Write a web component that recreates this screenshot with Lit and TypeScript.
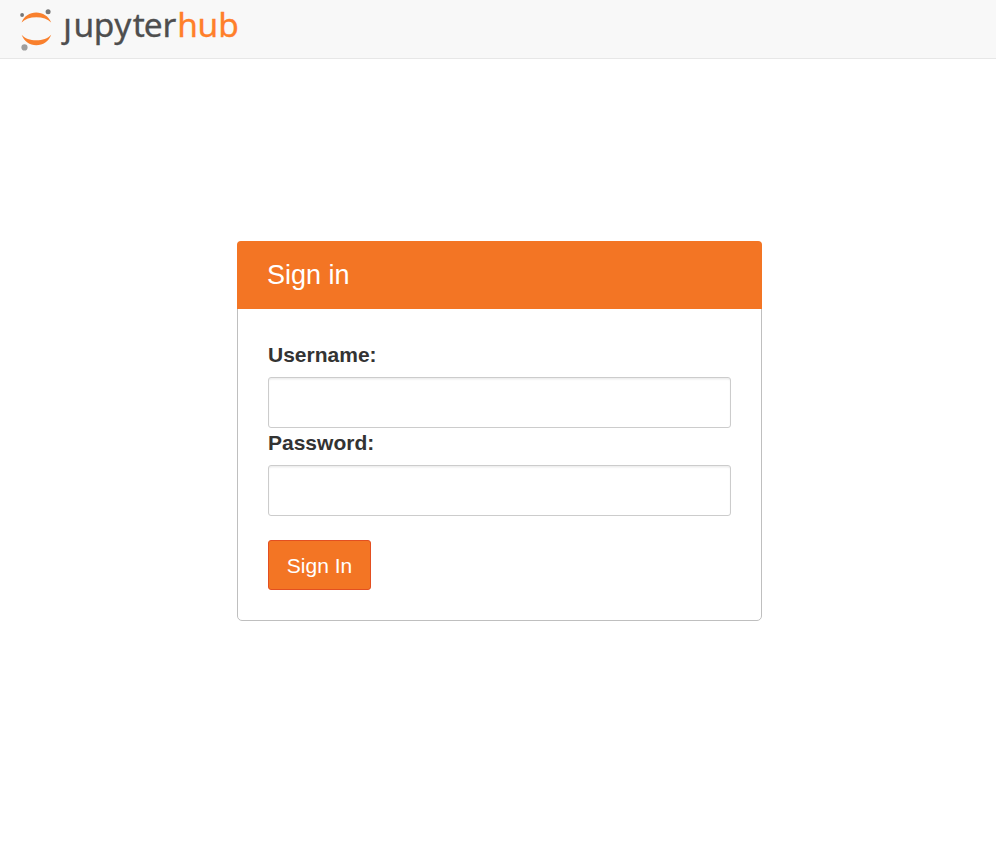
import { LitElement, html, css, svg } from "lit";
import { customElement } from "lit/decorators.js";

const planets = svg`
  <path fill="#f9802d" d="M21.600 22.600C24 16.300 29.600 12.600 36.200 12.600S48.600 16.300 51.200 22.600C47.800 19.100 42.500 17.300 36.300 17.300S25 19.100 21.600 22.600Z"/>
  <path fill="#f9802d" d="M21.600 34.800C24.200 41.500 29.600 45.200 36.300 45.200S48.800 41.500 51.200 34.800C47.800 38.600 42.500 40.300 36.300 40.300S25 38.600 21.600 34.800Z"/>
  <circle cx="48.100" cy="11.700" r="2.500" fill="#767677"/>
  <circle cx="22.100" cy="15" r="1.900" fill="#767677"/>
  <circle cx="24.500" cy="47.400" r="3.100" fill="#9e9e9e"/>`;

@customElement("hub-logo")
export class HubLogo extends LitElement {
  static styles = css`
    :host { display: block; width: 250px; height: 58px; }
    svg { display: block; }
    text { font-family: "Noto Sans", "Open Sans", sans-serif; font-size: 33.5px; stroke-width: 0.3px; }
    .jupyter { fill: #4e4e4e; stroke: #4e4e4e; }
    .hub { fill: #ff7f2a; stroke: #ff7f2a; }
  `;
  render() {
    return html`<svg width="250" height="58" viewBox="0 0 250 58" role="img" aria-label="jupyterhub">
      ${planets}
      <text class="jupyter" x="63.200 73.400 93.800 114.300 132.700 143.800 162.400" y="37">ȷupyter</text>
      <text class="hub" x="177.300 197.600 218.200" y="37">hub</text>
    </svg>`;
  }
}

@customElement("app-root")
export class AppRoot extends LitElement {
  static styles = css`
    :host {
      display: block;
      height: 849px;
      background: #fff;
      color: #333;
      font: 21px/30px "Liberation Sans", Arial, sans-serif;
    }
    * { box-sizing: border-box; }
    header { height: 59px; background: #f8f8f8; border-bottom: 1px solid #e7e7e7; }
    form {
      width: 525px;
      height: 380px;
      margin: 182px 0 0 237px;
      border: 1px solid #bfbfbf;
      border-radius: 5px;
      display: flex;
      flex-direction: column;
    }
    .heading {
      height: 68px;
      flex: none;
      margin: -1px -1px 0;
      padding: 0 30px;
      background: #f37524;
      border-radius: 4px 4px 0 0;
      color: #fff;
      font-size: 27px;
      line-height: 68px;
    }
    .fields {
      padding: 31px 30px 0;
      display: flex;
      flex-direction: column;
      align-items: flex-start;
    }
    label { height: 37px; font-weight: bold; }
    input {
      width: 463px;
      height: 51px;
      margin: 0;
      padding: 9px 18px;
      border: 1px solid #ccc;
      border-radius: 3px;
      background: #fff;
      box-shadow: inset 0 1.5px 1.5px rgba(0, 0, 0, 0.075);
      font: inherit;
      outline: none;
    }
    button {
      width: 103px;
      height: 50px;
      margin-top: 24px;
      padding: 2px 0 0;
      border: 1px solid #e34f21;
      border-radius: 3px;
      background: #f37524;
      color: #fff;
      font: inherit;
    }
  `;
  render() {
    return html`
      <header><hub-logo></hub-logo></header>
      <form @submit=${(e: Event) => e.preventDefault()}>
        <div class="heading">Sign in</div>
        <div class="fields">
          <label for="username">Username:</label>
          <input id="username" type="text" />
          <label for="password">Password:</label>
          <input id="password" type="password" />
          <button type="submit">Sign In</button>
        </div>
      </form>
    `;
  }
}
